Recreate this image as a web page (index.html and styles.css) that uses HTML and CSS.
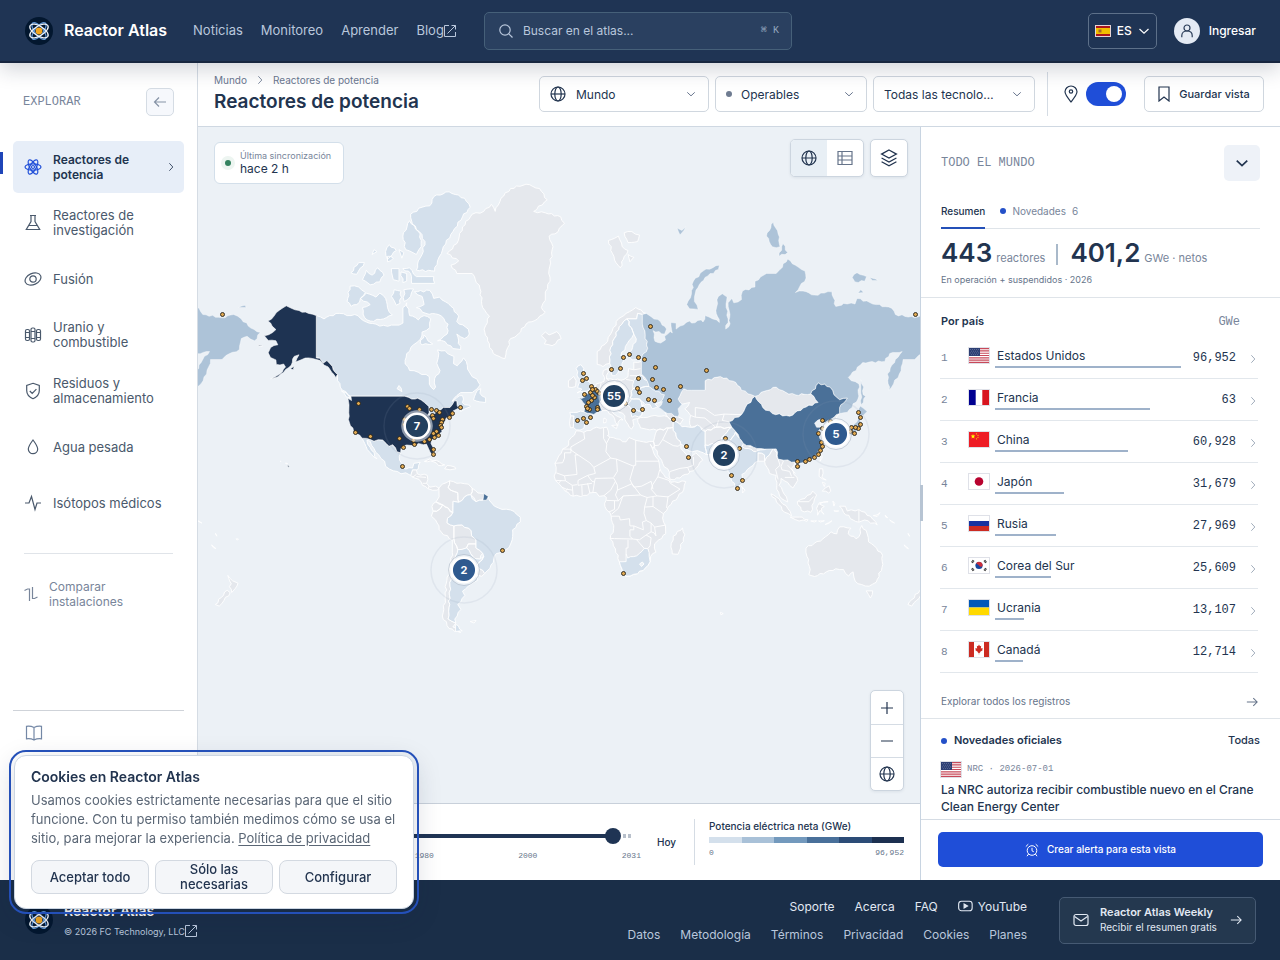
FILE: index.html
```html
<!DOCTYPE html>
<html lang="es">
<head>
<meta charset="utf-8">
<meta name="viewport" content="width=device-width, initial-scale=1">
<title>Reactores de potencia · Reactor Atlas</title>
<link rel="stylesheet" href="styles.css">
</head>
<body>
<svg class="sprite" aria-hidden="true">
  <symbol id="logo" viewBox="0 0 28 28"><circle cx="14" cy="14" r="14" fill="#03172f"/><g fill="none" stroke="#5f98d8" stroke-width="1.2"><ellipse cx="14" cy="14" rx="10.200" ry="4.200" transform="rotate(52 14 14)"/><ellipse cx="14" cy="14" rx="10.200" ry="4.200" transform="rotate(-52 14 14)"/></g><g fill="none" stroke="#f2f6fb" stroke-width="1.300"><ellipse cx="14" cy="14" rx="10.400" ry="4.800" transform="rotate(32 14 14)"/><ellipse cx="14" cy="14" rx="10.400" ry="4.800" transform="rotate(-32 14 14)"/></g><circle cx="14" cy="14" r="3.400" fill="#f2a51f"/></symbol>
  <symbol id="external" viewBox="0 0 12 12"><path d="M5 .5H.5v11h11V7M7.500.5h4v4M11.500.5l-8 8"/></symbol>
  <symbol id="search" viewBox="0 0 14 14"><circle cx="6" cy="6" r="5.200"/><path d="M9.800 9.800l3.700 3.700"/></symbol>
  <symbol id="down" viewBox="0 0 12 12"><path d="M1.500 4l4.500 4.200L10.500 4"/></symbol>
  <symbol id="right" viewBox="0 0 12 12"><path d="M4 1.500l4.200 4.500L4 10.500"/></symbol>
  <symbol id="arrow-right" viewBox="0 0 14 14"><path d="M1 7h12M8.500 2.500L13 7l-4.500 4.500"/></symbol>
  <symbol id="arrow-left" viewBox="0 0 14 14"><path d="M13 7H1.500M6 2.500L1.500 7 6 11.500"/></symbol>
  <symbol id="user" viewBox="0 0 14 14"><circle cx="7" cy="4" r="3"/><path d="M1.800 13.200V11.500C1.800 8.800 4 7 7 7s5.200 1.800 5.200 4.500v1.700"/></symbol>
  <symbol id="globe" viewBox="0 0 16 16"><circle cx="8" cy="8" r="7"/><ellipse cx="8" cy="8" rx="3.200" ry="7"/><path d="M1 8h14"/></symbol>
  <symbol id="pin" viewBox="0 0 14 18"><path d="M7 17C3.500 12.500 1 9.500 1 6.800a6 5.800 0 0 1 12 0C13 9.500 10.500 12.500 7 17z"/><circle cx="7" cy="6.500" r="1.700"/></symbol>
  <symbol id="bookmark" viewBox="0 0 12 16"><path d="M1 1h10v14l-5-4-5 4z"/></symbol>
  <symbol id="table" viewBox="0 0 16 16"><path d="M1 1.500h14v13H1zM5 1.500v13M1 6h14M1 10h14"/></symbol>
  <symbol id="layers" viewBox="0 0 16 17"><path d="M8 1l7 3.800-7 3.800-7-3.800zM1 8.500l7 3.800 7-3.800M1 12l7 3.800L15 12"/></symbol>
  <symbol id="atom" viewBox="0 0 18 18"><g><ellipse cx="9" cy="9" rx="8" ry="3.200"/><ellipse cx="9" cy="9" rx="8" ry="3.200" transform="rotate(60 9 9)"/><ellipse cx="9" cy="9" rx="8" ry="3.200" transform="rotate(120 9 9)"/><circle cx="9" cy="9" r="1.500"/></g></symbol>
  <symbol id="flask" viewBox="0 0 18 18"><path d="M6 1.500h6M7 1.500v6L2.300 15.500h13.400L11 7.500v-6M5 11.500h8"/></symbol>
  <symbol id="fusion" viewBox="0 0 18 18"><ellipse cx="9" cy="9" rx="8.300" ry="5.600" transform="rotate(-24 9 9)"/><circle cx="9" cy="9" r="3.200"/></symbol>
  <symbol id="rods" viewBox="0 0 18 18"><rect x="1.500" y="3.500" width="4" height="11" rx="1.500"/><rect x="7" y="2" width="4" height="14" rx="1.500"/><rect x="12.500" y="3.500" width="4" height="11" rx="1.500"/><path d="M1.500 6.500h4M1.500 11.500h4M7 5.500h4M7 12.500h4M12.500 6.500h4M12.500 11.500h4"/></symbol>
  <symbol id="shield" viewBox="0 0 18 18"><path d="M9 1.300l6.300 2.200v5c0 4-2.600 6.600-6.300 8.200-3.700-1.600-6.300-4.200-6.300-8.200v-5zM5.800 9l2.400 2.400 4.200-4.300"/></symbol>
  <symbol id="drop" viewBox="0 0 18 18"><path d="M9 2c3 4 4.700 6.500 4.700 9a4.700 4.700 0 0 1-9.400 0C4.300 8.500 6 6 9 2z"/></symbol>
  <symbol id="pulse" viewBox="0 0 18 18"><path d="M1 9h4l2.500-6.500L11 15.500 13 9h4"/></symbol>
  <symbol id="compare" viewBox="0 0 14 16"><path d="M.5 4.500L3.500 3h2v12M8.500 1v11.500h2l3-1.500"/></symbol>
  <symbol id="book" viewBox="0 0 18 18"><path d="M9 3.500C6.500 2.200 4 2 1.500 2.300v12.500c2.500-.3 5-.1 7.500 1.200 2.500-1.300 5-1.500 7.500-1.200V2.300C14 2 11.500 2.200 9 3.500zM9 3.500V16"/></symbol>
  <symbol id="plus" viewBox="0 0 14 14"><path d="M1 7h12M7 1v12"/></symbol>
  <symbol id="minus" viewBox="0 0 14 14"><path d="M1 7h12"/></symbol>
  <symbol id="alarm" viewBox="0 0 14 14"><circle cx="7" cy="7.500" r="4.800"/><path d="M7 4.800v3l1.800 1M.8 3.600l2.500-2.400M13.200 3.600l-2.500-2.400M3.600 11L2 13.200M10.400 11l1.600 2.200"/></symbol>
  <symbol id="mail" viewBox="0 0 16 14"><rect x="1" y="1.500" width="14" height="11" rx="2"/><path d="M1.500 3.500L8 8l6.500-4.500"/></symbol>
  <symbol id="youtube" viewBox="0 0 16 12"><rect x=".700" y=".900" width="14.400" height="10.200" rx="3"/><path d="M6.500 3.800v4.400L10.200 6z" fill="currentColor"/></symbol>

  <symbol id="flag-us" viewBox="0 0 20 15"><path fill="#fff" d="M0 0h20v15H0z"/><path stroke="#c8495a" stroke-width="1.150" d="M0 .6h20M0 2.900h20M0 5.200h20M0 7.500h20M0 9.800h20M0 12.100h20M0 14.400h20"/><path fill="#2d3f74" d="M0 0h11v8H0z"/><path stroke="#8a96b8" stroke-width=".700" stroke-dasharray=".7 1.300" d="M1 1.500h9M2 3.200h8M1 4.900h9M2 6.600h8"/></symbol>
  <symbol id="flag-fr" viewBox="0 0 20 15"><path fill="#fff" d="M0 0h20v15H0z"/><path fill="#000091" d="M0 0h6.700v15H0z"/><path fill="#d8141f" d="M13.300 0H20v15h-6.700z"/></symbol>
  <symbol id="flag-cn" viewBox="0 0 20 15"><path fill="#ee1c25" d="M0 0h20v15H0z"/><path fill="#ff0" d="M4 2l.6 1.600h1.700L5 4.700l.5 1.700L4 5.400l-1.500 1L3 4.700 1.700 3.600h1.700z"/><g fill="#ffd500"><circle cx="7.500" cy="1.800" r=".6"/><circle cx="9" cy="3.300" r=".6"/><circle cx="9" cy="5.300" r=".6"/><circle cx="7.500" cy="6.800" r=".6"/></g></symbol>
  <symbol id="flag-jp" viewBox="0 0 20 15"><path fill="#fff" d="M0 0h20v15H0z"/><circle cx="10" cy="7.500" r="4.300" fill="#b8032f"/></symbol>
  <symbol id="flag-ru" viewBox="0 0 20 15"><path fill="#fff" d="M0 0h20v5H0z"/><path fill="#1632a0" d="M0 5h20v5H0z"/><path fill="#cc2b22" d="M0 10h20v5H0z"/></symbol>
  <symbol id="flag-kr" viewBox="0 0 20 15"><path fill="#fff" d="M0 0h20v15H0z"/><circle cx="10" cy="7.500" r="3.600" fill="#17479e"/><path fill="#cd2e3a" d="M7 5.500a3.600 3.600 0 0 1 6.600 2.300c-1 1.500-2.600 1-3.600-.3S7.800 6 7 5.500z"/><path stroke="#333" stroke-width="2.200" d="M3 4.700l1.800-2.600M3 10.300l1.800 2.600M17 4.700l-1.800-2.600M17 10.300l-1.800 2.600" stroke-dasharray="1.200 .400"/></symbol>
  <symbol id="flag-ua" viewBox="0 0 20 15"><path fill="#0057b7" d="M0 0h20v7.500H0z"/><path fill="#ffd900" d="M0 7.500h20V15H0z"/></symbol>
  <symbol id="flag-ca" viewBox="0 0 20 15"><path fill="#fff" d="M0 0h20v15H0z"/><path fill="#cc2b22" d="M0 0h5v15H0zM15 0h5v15h-5zM10 2.500l1 1.800 1.200-.6-.4 2.800 1.900-.6-.5 1.500.7.600-2.900 2 .2.900-1-.1v1.700h-.4v-1.700l-1 .1.200-.9-2.900-2 .7-.6-.5-1.500 1.900.6-.4-2.800 1.200.6z"/></symbol>
  <symbol id="flag-es" viewBox="0 0 16 12"><path fill="#aa151b" d="M0 0h16v12H0z"/><path fill="#f1bf00" d="M0 3h16v6H0z"/><path fill="#a8662a" d="M3.500 4.500h3v3h-3z"/></symbol>
</svg>

<header class="topbar">
  <a class="brand" href="#"><svg class="logo"><use href="#logo"/></svg>Reactor Atlas</a>
  <nav class="topnav" aria-label="Principal">
    <a href="#">Noticias</a><a href="#">Monitoreo</a><a href="#">Aprender</a><a href="#">Blog<svg class="icon external"><use href="#external"/></svg></a>
  </nav>
  <label class="search">
    <svg class="icon search-icon"><use href="#search"/></svg>
    <input type="search" placeholder="Buscar en el atlas..." aria-label="Buscar en el atlas">
    <kbd>⌘ K</kbd>
  </label>
  <div class="account">
    <button class="lang" type="button"><svg class="flag-small"><use href="#flag-es"/></svg>ES<svg class="icon s12"><use href="#down"/></svg></button>
    <a class="login" href="#"><span class="avatar"><svg class="icon s14"><use href="#user"/></svg></span>Ingresar</a>
  </div>
</header>

<div class="workspace">
  <aside class="sidebar">
    <div class="side-head"><h2>EXPLORAR</h2><button type="button" class="collapse" aria-label="Contraer"><svg class="icon s14"><use href="#arrow-left"/></svg></button></div>
    <nav class="side-nav" aria-label="Explorar">
      <a class="active" href="#"><svg class="icon s18"><use href="#atom"/></svg><span>Reactores de potencia</span><svg class="icon s10 chevron"><use href="#right"/></svg></a>
      <a href="#"><svg class="icon s18"><use href="#flask"/></svg><span>Reactores de investigación</span></a>
      <a href="#"><svg class="icon s18"><use href="#fusion"/></svg><span>Fusión</span></a>
      <a href="#"><svg class="icon s18"><use href="#rods"/></svg><span>Uranio y combustible</span></a>
      <a href="#"><svg class="icon s18"><use href="#shield"/></svg><span>Residuos y almacenamiento</span></a>
      <a href="#"><svg class="icon s18"><use href="#drop"/></svg><span>Agua pesada</span></a>
      <a href="#"><svg class="icon s18"><use href="#pulse"/></svg><span>Isótopos médicos</span></a>
    </nav>
    <a class="compare" href="#"><svg class="icon s14"><use href="#compare"/></svg><span>Comparar instalaciones</span></a>
    <div class="side-foot"><a href="#" aria-label="Guía"><svg class="icon s18"><use href="#book"/></svg></a></div>
  </aside>

  <main class="main">
    <div class="toolbar">
      <div class="titles">
        <nav class="crumbs" aria-label="Ruta"><a href="#">Mundo</a><svg class="icon s10"><use href="#right"/></svg><span>Reactores de potencia</span></nav>
        <h1>Reactores de potencia</h1>
      </div>
      <div class="filters">
        <label class="pick region"><svg class="icon s16"><use href="#globe"/></svg><select aria-label="Región"><option>Mundo</option></select><svg class="icon s10 caret"><use href="#down"/></svg></label>
        <label class="pick status"><i class="dot"></i><select aria-label="Estado"><option>Operables</option></select><svg class="icon s10 caret"><use href="#down"/></svg></label>
        <label class="pick tech"><select aria-label="Tecnología"><option>Todas las tecnologías</option></select><svg class="icon s10 caret"><use href="#down"/></svg></label>
      </div>
      <label class="toggle"><svg class="icon pin"><use href="#pin"/></svg><input type="checkbox" role="switch" checked aria-label="Mostrar ubicaciones"></label>
      <button class="save" type="button"><svg class="icon bookmark"><use href="#bookmark"/></svg>Guardar vista</button>
    </div>

    <div class="content">
      <section class="map-column">
        <div class="map">
          <svg id="world" class="world" viewBox="198 127 722 676" preserveAspectRatio="xMidYMid slice" role="img" aria-label="Mapa mundial de reactores"></svg>
          <div class="sync"><i></i><div><small>Última sincronización</small><b>hace 2 h</b></div></div>
          <div class="map-tools">
            <div class="segment"><button type="button" class="on" aria-label="Mapa"><svg class="icon s16"><use href="#globe"/></svg></button><button type="button" aria-label="Tabla"><svg class="icon s16"><use href="#table"/></svg></button></div>
            <button class="layers" type="button" aria-label="Capas"><svg class="icon s18"><use href="#layers"/></svg></button>
          </div>
          <div class="zoom">
            <button type="button" aria-label="Acercar"><svg class="icon s14"><use href="#plus"/></svg></button>
            <button type="button" aria-label="Alejar"><svg class="icon s14"><use href="#minus"/></svg></button>
            <button type="button" aria-label="Mundo entero"><svg class="icon s16"><use href="#globe"/></svg></button>
          </div>
        </div>
        <div class="timeline">
          <div class="years">
            <input type="range" min="1954" max="2031" value="2029" aria-label="Año">
            <div class="ticks"><span>1980</span><span>2000</span><span>2031</span></div>
          </div>
          <button class="today" type="button">Hoy</button>
          <div class="legend">
            <strong>Potencia eléctrica neta (GWe)</strong>
            <div class="scale"><i></i><i></i><i></i><i></i><i></i><i></i></div>
            <div class="ticks"><span>0</span><span>96,952</span></div>
          </div>
        </div>
      </section>

      <aside class="panel">
        <div class="panel-head"><h2>TODO EL MUNDO</h2><button type="button" aria-label="Plegar panel"><svg class="icon s14"><use href="#down"/></svg></button></div>
        <div class="tabs" role="tablist"><button type="button" role="tab" aria-selected="true">Resumen</button><button type="button" role="tab" aria-selected="false"><i></i>Novedades <span>6</span></button></div>
        <div class="stats">
          <p class="figures"><b>443</b><span>reactores</span><i></i><b>401,2</b><span>GWe · netos</span></p>
          <p class="note">En operación + suspendidos · 2026</p>
        </div>
        <div class="ranking">
          <div class="ranking-head"><h3>Por país</h3><span>GWe</span></div>
          <ol>
            <li><a href="#"><span class="pos">1</span><svg class="flag"><use href="#flag-us"/></svg><span class="country">Estados Unidos<i style="width:100%"></i></span><span class="value">96,952</span><svg class="icon s10"><use href="#right"/></svg></a></li>
            <li><a href="#"><span class="pos">2</span><svg class="flag"><use href="#flag-fr"/></svg><span class="country">Francia<i style="width:83.500%"></i></span><span class="value">63</span><svg class="icon s10"><use href="#right"/></svg></a></li>
            <li><a href="#"><span class="pos">3</span><svg class="flag"><use href="#flag-cn"/></svg><span class="country">China<i style="width:71.300%"></i></span><span class="value">60,928</span><svg class="icon s10"><use href="#right"/></svg></a></li>
            <li><a href="#"><span class="pos">4</span><svg class="flag"><use href="#flag-jp"/></svg><span class="country">Japón<i style="width:37.200%"></i></span><span class="value">31,679</span><svg class="icon s10"><use href="#right"/></svg></a></li>
            <li><a href="#"><span class="pos">5</span><svg class="flag"><use href="#flag-ru"/></svg><span class="country">Rusia<i style="width:33%"></i></span><span class="value">27,969</span><svg class="icon s10"><use href="#right"/></svg></a></li>
            <li><a href="#"><span class="pos">6</span><svg class="flag"><use href="#flag-kr"/></svg><span class="country">Corea del Sur<i style="width:30.300%"></i></span><span class="value">25,609</span><svg class="icon s10"><use href="#right"/></svg></a></li>
            <li><a href="#"><span class="pos">7</span><svg class="flag"><use href="#flag-ua"/></svg><span class="country">Ucrania<i style="width:15.400%"></i></span><span class="value">13,107</span><svg class="icon s10"><use href="#right"/></svg></a></li>
            <li><a href="#"><span class="pos">8</span><svg class="flag"><use href="#flag-ca"/></svg><span class="country">Canadá<i style="width:14.900%"></i></span><span class="value">12,714</span><svg class="icon s10"><use href="#right"/></svg></a></li>
          </ol>
          <a class="explore" href="#">Explorar todos los registros<svg class="icon s12"><use href="#arrow-right"/></svg></a>
        </div>
        <div class="news">
          <div class="news-head"><h3><i></i>Novedades oficiales</h3><a href="#">Todas</a></div>
          <article><p class="source"><svg class="flag"><use href="#flag-us"/></svg>NRC · 2026-07-01</p><a class="headline" href="#">La NRC autoriza recibir combustible nuevo en el Crane Clean Energy Center</a></article>
        </div>
        <div class="alert"><button type="button"><svg class="icon s14"><use href="#alarm"/></svg>Crear alerta para esta vista</button></div>
        <div class="grip" aria-hidden="true"></div>
      </aside>
    </div>
  </main>
</div>

<footer class="footer">
  <div class="foot-brand"><svg class="logo"><use href="#logo"/></svg><div><b>Reactor Atlas</b><a href="#">© 2026 FC Technology, LLC<svg class="icon external"><use href="#external"/></svg></a></div></div>
  <nav class="foot-links" aria-label="Pie">
    <div class="bright"><a href="#">Soporte</a><a href="#">Acerca</a><a href="#">FAQ</a><a href="#"><svg class="icon youtube"><use href="#youtube"/></svg>YouTube</a></div>
    <div><a href="#">Datos</a><a href="#">Metodología</a><a href="#">Términos</a><a href="#">Privacidad</a><a href="#">Cookies</a><a href="#">Planes</a></div>
  </nav>
  <a class="weekly" href="#"><svg class="icon s16"><use href="#mail"/></svg><span><b>Reactor Atlas Weekly</b><small>Recibir el resumen gratis</small></span><svg class="icon s12"><use href="#arrow-right"/></svg></a>
</footer>

<section class="cookies" role="dialog" aria-labelledby="cookies-title">
  <h2 id="cookies-title">Cookies en Reactor Atlas</h2>
  <p>Usamos cookies estrictamente necesarias para que el sitio funcione. Con tu permiso también medimos cómo se usa el sitio, para mejorar la experiencia. <a href="#">Política de privacidad</a></p>
  <div class="choices"><button type="button">Aceptar todo</button><button type="button">Sólo las necesarias</button><button type="button">Configurar</button></div>
</section>
<script src="map.js"></script>
</body>
</html>
```

FILE: styles.css
```css
:root {
  --navy: #1f3454;
  --ink: #22344f;
  --text: #4a596c;
  --muted: #78859a;
  --line: #d5dce4;
  --blue: #1f4ed8;
  --mono: "Liberation Mono", monospace;
}
* { box-sizing: border-box; }
body {
  margin: 0;
  height: 100vh;
  display: flex;
  flex-direction: column;
  font: 12px/15px Inter, "Liberation Sans", sans-serif;
  color: var(--ink);
  background: #fff;
}
a { color: inherit; text-decoration: none; }
button, input, select { font: inherit; color: inherit; }
button { cursor: pointer; padding: 0; border: 0; background: none; }
h1, h2, h3, p, ol { margin: 0; padding: 0; }
.sprite { display: none; }
.icon { fill: none; stroke: currentColor; stroke-width: 1.2; flex: none; width: 16px; height: 16px; overflow: visible; }
.s10 { width: 10px; height: 10px; }
.s12 { width: 12px; height: 12px; }
.s14 { width: 14px; height: 14px; }
.s16 { width: 16px; height: 16px; }
.s18 { width: 18px; height: 18px; }
.external { width: 12px; height: 12px; stroke-width: 1; }
.logo { width: 30px; height: 28px; flex: none; }

/* Top bar */
.topbar {
  position: relative;
  z-index: 3;
  flex: none;
  display: flex;
  align-items: center;
  height: 63px;
  padding: 0 24px;
  background: var(--navy);
  border-bottom: 2px solid #17263f;
  box-shadow: 0 6px 20px rgba(20, 35, 60, .2);
  color: #fff;
}
.brand { display: flex; align-items: center; gap: 10px; font-size: 16px; font-weight: 600; }
.topnav { display: flex; gap: 18px; margin-left: 26px; font-size: 13px; color: #b9c7dc; }
.topnav a { display: flex; align-items: center; }
.search {
  display: flex;
  align-items: center;
  gap: 10px;
  width: 308px;
  height: 38px;
  margin-left: 28px;
  padding: 0 12px 0 14px;
  border: 1px solid #466079;
  border-radius: 5px;
  background: #2a4060;
  color: #b9c7dc;
}
.search-icon { width: 14px; height: 14px; }
.search input { flex: 1; min-width: 0; padding: 0; border: 0; outline: 0; background: none; }
.search input::placeholder { color: #b9c7dc; opacity: 1; }
.search kbd { font: 10px/12px var(--mono), "DejaVu Sans"; color: #95a6bf; }
.account { display: flex; align-items: center; gap: 17px; margin-left: auto; font-weight: 500; }
.lang { display: flex; align-items: center; gap: 6px; height: 36px; padding: 0 6px; border: 1px solid #5d7089; border-radius: 5px; }
.flag-small { width: 16px; height: 12px; outline: 1px solid #e7d5d5; outline-offset: -1px; }
.login { display: flex; align-items: center; gap: 9px; }
.avatar { display: grid; place-items: center; width: 26px; height: 26px; border-radius: 50%; background: #e4eaf4; color: #2b3d59; }

/* Frame */
.workspace { flex: 1; min-height: 0; display: grid; grid-template-columns: 198px minmax(0, 1fr); }
.main { display: flex; flex-direction: column; min-height: 0; }
.content { flex: 1; min-height: 0; display: grid; grid-template-columns: minmax(0, 1fr) 360px; }

/* Sidebar */
.sidebar { display: flex; flex-direction: column; min-height: 0; padding-top: 25px; border-right: 1px solid var(--line); color: var(--text); }
.side-head { display: flex; align-items: center; justify-content: space-between; padding: 0 23px; }
.side-head h2 { font: 12px/15px var(--mono); color: var(--muted); }
.collapse { display: grid; place-items: center; width: 28px; height: 28px; border: 1px solid var(--line); border-radius: 5px; background: #f6f8fc; color: #8693a6; }
.side-nav { display: flex; flex-direction: column; gap: 4px; margin: 25px 13px 0; font-size: 13px; }
.side-nav a { position: relative; display: flex; align-items: center; gap: 11px; height: 52px; padding: 0 8px 0 11px; border-radius: 5px; }
.side-nav span { flex: 1; }
.side-nav .active { background: #e7eef8; color: var(--ink); font-size: 12px; font-weight: 600; }
.side-nav .active .icon:first-child { color: var(--blue); }
.side-nav .active::before { content: ""; position: absolute; left: -13px; top: 11px; width: 3px; height: 22px; background: #1f45b8; }
.side-nav .chevron { stroke-width: 1; }
.compare { display: flex; align-items: center; gap: 11px; margin: 24px 24px 0; padding-top: 25px; border-top: 1px solid #e0e4e9; color: var(--muted); }
.compare span { flex: 1; }
.compare .icon { height: 16px; }
.side-foot { flex: none; height: 170px; margin: auto 13px 0; padding: 13px 12px; border-top: 1px solid #cfd3d9; color: #7488a6; }

/* Toolbar */
.toolbar { flex: none; display: flex; align-items: center; height: 64px; padding: 0 16px 1px; border-bottom: 1px solid #cfd8e2; }
.titles { flex: 1; min-width: 0; }
.crumbs { display: flex; align-items: center; gap: 8px; font-size: 10px; line-height: 12px; color: #6b7890; }
h1 { font-size: 19px; line-height: 26px; font-weight: 600; white-space: nowrap; margin-top: 3px; }
.crumbs .icon { stroke-width: 1; }
.filters { display: flex; gap: 6px; }
.pick { display: flex; align-items: center; height: 36px; padding: 0 12px 0 10px; border: 1px solid #d0d7df; border-radius: 5px; background: #fff; }
.pick select { flex: 1; min-width: 0; height: 34px; padding: 0; border: 0; outline: 0; background: none; appearance: none; text-overflow: ellipsis; }
.pick .caret { margin-left: 12px; color: #6b7890; }
.region { width: 170px; gap: 10px; }
.status { width: 152px; gap: 9px; }
.tech { width: 162px; }
.pick.region .caret, .pick.status .caret { margin-left: 0; }
.dot { width: 6px; height: 6px; border-radius: 50%; background: #6f7c91; }
.toggle { display: flex; align-items: center; gap: 8px; height: 44px; margin-left: 12px; padding-left: 16px; border-left: 1px solid var(--line); }
.pin { width: 14px; height: 18px; }
.toggle input { appearance: none; display: flex; width: 40px; height: 24px; margin: 0; padding: 4px; border-radius: 12px; background: var(--blue); justify-content: flex-end; }
.toggle input::before { content: ""; width: 16px; height: 16px; border-radius: 50%; background: #fff; }
.save { display: flex; align-items: center; justify-content: center; gap: 9px; width: 120px; height: 36px; margin-left: 18px; border: 1px solid #d0d7df; border-radius: 5px; font-size: 11px; font-weight: 500; white-space: nowrap; }
.bookmark { width: 12px; height: 16px; }

/* Map */
.map-column { display: flex; flex-direction: column; min-height: 0; }
.map { position: relative; flex: 1; min-height: 0; overflow: hidden; background: #ecf1f6; }
.world { position: absolute; inset: 0; width: 100%; height: 100%; }
.land { stroke: #fff; stroke-width: .9; stroke-linejoin: round; fill: #e5e8ed; }
.land.low { fill: #d4e0ec; }
.land.mid { fill: #adc3d8; stroke-width: .4; }
.land.high { fill: #4a7098; stroke-width: .6; }
.land.top { fill: #1e3352; stroke-width: .6; }
.land.gap { fill: #ecf1f6; }
.border { fill: none; stroke: #fff; stroke-width: .9; }
.site { fill: #e0a850; stroke: #25221c; stroke-width: .9; }
.halo { fill: none; stroke: #8c9db4; stroke-opacity: .13; stroke-width: 1.5; }
.ring { fill: #fff; fill-opacity: .5; stroke: #9aa8ba; stroke-opacity: .5; stroke-width: 1; }
.core { stroke: #fff; stroke-width: 2.500; fill: #22405f; }
.core.near { fill: #2f5a8f; }
.count { fill: #fff; font: 700 11px Inter, sans-serif; text-anchor: middle; }
.sync { position: absolute; left: 16px; top: 15px; display: flex; align-items: center; gap: 5px; height: 42px; padding: 0 12px 0 6px; border: 1px solid #d3dfea; border-radius: 6px; background: #fff; }
.sync i { flex: none; width: 6px; height: 6px; margin: 4px; border-radius: 50%; background: #34825f; box-shadow: 0 0 0 4px #edf5f1; }
.sync small { display: block; font-size: 9px; line-height: 12px; color: var(--muted); }
.sync b { display: block; line-height: 14px; font-weight: 400; }
.map-tools { position: absolute; top: 12px; right: 12px; display: flex; gap: 6px; }
.segment, .layers, .zoom { border: 1px solid #ccd5df; border-radius: 5px; background: #fff; overflow: hidden; box-shadow: 0 1px 3px rgba(30, 50, 80, .08); }
.segment { display: flex; width: 74px; height: 38px; }
.segment button, .layers { flex: 1; display: grid; place-items: center; }
.segment button + button { color: #66748a; }
.segment .on { background: #e8eff5; }
.layers { flex: none; width: 38px; height: 38px; }
.zoom { position: absolute; right: 16px; bottom: 12px; display: grid; grid-auto-rows: 33px; width: 34px; }
.zoom button { display: grid; place-items: center; }
.zoom button + button { border-top: 1px solid var(--line); }

/* Timeline */
.timeline { flex: none; display: flex; align-items: center; height: 77px; padding: 0 16px; border-top: 1px solid #c8d0da; background: #fff; }
.years { flex: 1; min-width: 0; padding-top: 4px; }
.years input { appearance: none; display: block; width: calc(100% - 20px); height: 16px; margin: 0 10px 6px; background: linear-gradient(90deg, var(--navy) 96%, #fff 96% 98%, #b8c0cb 98% 98.700%, #fff 98.700% 99.300%, #b8c0cb 99.300%) center / 100% 4px no-repeat; }
.years input::-webkit-slider-thumb { appearance: none; width: 16px; height: 16px; border-radius: 50%; background: var(--navy); }
.ticks { display: flex; justify-content: space-between; font: 8px/11px var(--mono); color: #68778c; }
.years .ticks { width: 53%; margin-left: auto; }
.today { margin: 0 18px 0 16px; font-size: 10px; font-weight: 500; }
.legend { width: 210px; height: 46px; padding-left: 14px; border-left: 1px solid var(--line); }
.legend strong { display: block; font-size: 10px; line-height: 14px; font-weight: 500; }
.scale { display: flex; margin: 4px 0; }
.scale i { flex: 1; height: 6px; background: #d4e0ec; }
.scale i:nth-child(2) { background: #a9c1d8; }
.scale i:nth-child(3) { background: #7399bd; }
.scale i:nth-child(4) { background: #49709a; }
.scale i:nth-child(5) { background: #2c4c77; }
.scale i:nth-child(6) { background: #1c3050; }

/* Right panel */
.panel { position: relative; display: flex; flex-direction: column; min-height: 0; border-left: 1px solid #c8d4e1; background: #fff; }
.grip { position: absolute; left: -1px; top: 358px; width: 3px; height: 36px; background: #b7c4d3; }
.panel-head { flex: none; display: flex; align-items: center; justify-content: space-between; height: 72px; padding: 0 20px; }
.panel-head h2 { font: 12px/15px var(--mono); color: var(--muted); }
.panel-head button { display: grid; place-items: center; width: 36px; height: 36px; border-radius: 5px; background: #eef2f8; }
.panel-head .icon { stroke-width: 1.500; }
.tabs { flex: none; display: flex; gap: 15px; height: 30px; margin: 0 20px; border-bottom: 1px solid #dfe4e9; font-size: 10px; }
.tabs button { display: flex; align-items: center; gap: 6px; height: 30px; padding-bottom: 6px; color: var(--muted); }
.tabs button[aria-selected=true] { color: var(--ink); border-bottom: 2px solid #2450b8; font-weight: 500; padding-bottom: 4px; }
.tabs i, .news-head i { width: 6px; height: 6px; border-radius: 50%; background: #2450c8; }
.stats { flex: none; height: 69px; padding: 7px 20px 0; border-bottom: 1px solid #dfe4e9; }
.figures { display: flex; align-items: baseline; gap: 4px; font-size: 11px; color: var(--muted); white-space: nowrap; }
.figures b { font-size: 26px; line-height: 34px; font-weight: 600; color: var(--ink); }
.figures i { align-self: center; width: 2px; height: 21px; margin: 3px 8px 0 7px; background: #a9b9ca; }
.note { margin-top: 3px; font-size: 9px; line-height: 14px; color: #66748a; }
.ranking { flex: none; padding: 16px 22px 0 19px; border-bottom: 1px solid #dfe4e9; }
.ranking-head { display: flex; justify-content: space-between; padding: 0 18px 0 1px; line-height: 15px; }
.ranking-head h3 { font-size: 11px; font-weight: 600; }
.ranking-head span { font: 12px/17px var(--mono); color: var(--muted); }
ol { margin-top: 6px; list-style: none; }
li a { display: grid; grid-template-columns: 29px 20px 194px 1fr 10px; align-items: center; height: 42px; padding-top: 2px; border-bottom: 1px solid #e2e7ec; }
.pos { padding: 0 0 0 1px; font: 11px/15px var(--mono); color: var(--muted); }
.flag { width: 20px; height: 15px; outline: 1px solid #dfe1e8; }
li .flag { align-self: start; margin-top: 9px; }
.country { display: block; margin-left: 6px; padding: 0 0 2px 2px; line-height: 17px; }
.country i { display: block; height: 2px; margin: 2px 0 0 -2px; background: #9fb2ca; }
.value { padding-right: 12px; text-align: right; font: 12px/15px var(--mono); }
li .icon { color: #8f9cad; stroke-width: 1; }
.explore { display: flex; align-items: center; justify-content: space-between; height: 45px; padding: 12px 0 0 1px; font-size: 10px; color: #66748a; }
.news { flex: 1; min-height: 0; overflow: hidden; padding: 14px 20px 0; }
.news-head { display: flex; justify-content: space-between; font-size: 11px; font-weight: 500; }
.news-head h3 { display: flex; align-items: center; gap: 7px; font-size: 11px; font-weight: 600; }
.source { display: flex; align-items: center; gap: 6px; margin: 14px 0 4px; font: 9px/15px var(--mono); color: var(--muted); }
.headline { display: block; font-size: 12px; line-height: 17px; font-weight: 500; }
.alert { flex: none; height: 61px; padding: 12px 17px 0; border-top: 1px solid var(--line); background: #fff; }
.alert button { display: flex; align-items: center; justify-content: center; gap: 8px; width: 100%; height: 35px; border-radius: 5px; background: var(--blue); color: #fff; font-size: 10px; font-weight: 500; }
.alert .icon { stroke-width: 1; }

/* Footer */
.footer { flex: none; display: flex; align-items: center; height: 80px; padding: 0 24px; background: #1a2e48; color: #b9c7dc; }
.foot-brand { display: flex; align-items: center; gap: 10px; margin-right: auto; font-size: 9px; }
.foot-brand b { display: block; line-height: 17px; margin-bottom: 5px; font-size: 14px; font-weight: 600; color: #fff; }
.foot-brand a { display: flex; align-items: center; }
.foot-links { display: grid; gap: 13px; }
.foot-links div { display: flex; justify-content: flex-end; gap: 20px; }
.foot-links a { display: flex; align-items: center; gap: 5px; }
.foot-links .bright { color: #e2e9f3; }
.youtube { width: 15px; height: 12px; }
.weekly { display: flex; align-items: center; gap: 11px; width: 197px; height: 47px; margin-left: 32px; padding: 0 13px; border: 1px solid #465a73; border-radius: 5px; background: #24384f; color: #e2e9f3; font-size: 11px; }
.weekly span { flex: 1; white-space: nowrap; }
.weekly b { display: block; font-weight: 600; }
.weekly small { display: block; font-size: 10px; }

/* Cookie notice */
.cookies {
  position: fixed;
  z-index: 5;
  left: 14px;
  bottom: 51px;
  width: 400px;
  padding: 13px 16px 14px;
  border: 1px solid #ccd6e3;
  border-radius: 12px;
  background: #fff;
  outline: 2px solid #2450b8;
  outline-offset: 3px;
  box-shadow: 0 8px 28px rgba(20, 35, 60, .18);
  font-size: 13px;
}
.cookies h2 { font-size: 14px; line-height: 16px; font-weight: 600; }
.cookies p { margin: 6px 0 12px; line-height: 19px; color: #5a6675; }
.cookies p a { text-decoration: underline; text-underline-offset: 2px; }
.choices { display: grid; grid-template-columns: repeat(3, 1fr); gap: 6px; }
.choices button { height: 34px; padding: 0 16px; border: 1px solid #d3d9e1; border-radius: 8px; background: #f4f6f9; line-height: 15px; font-weight: 500; }
```

FILE: map.js
```js
// Web Mercator projection in map units.
const LON0 = 587.6, PER_DEG = 1.924, EQUATOR = 504.6, RADIUS = 110.2;
const svg = document.getElementById('world');
const NS = 'http://www.w3.org/2000/svg';

function project(pair, shift) {
  const [lon, lat] = pair.split(',').map(Number);
  const y = EQUATOR - RADIUS * Math.log(Math.tan(Math.PI / 4 + lat * Math.PI / 360));
  return (LON0 + PER_DEG * (lon + shift)).toFixed(1) + ' ' + y.toFixed(1);
}
function add(tag, attrs, text) {
  const el = document.createElementNS(NS, tag);
  for (const k in attrs) el.setAttribute(k, attrs[k]);
  if (text) el.textContent = text;
  svg.appendChild(el);
}
// Breaks long edges into small deterministic steps so coasts look natural.
function rough(points) {
  const out = [];
  points.forEach((p, i) => {
    const q = points[(i + 1) % points.length];
    const [ax, ay] = p.split(' ').map(Number), [bx, by] = q.split(' ').map(Number);
    out.push(p);
    const len = Math.hypot(bx - ax, by - ay);
    if (len < 5 || Math.abs(by - ay) < .3 || Math.abs(bx - ax) < .3) return;
    const n = Math.floor(len / 3);
    // Order-independent seed keeps shared borders aligned.
    const s = Math.round((ax + bx) * 7 + (ay + by) * 13);
    const flip = ax < bx ? 1 : -1;
    for (let k = 1; k < n; k++) {
      const t = k / n, m = flip > 0 ? k : n - k;
      const off = Math.sin(s + m * 2.4) * .9 * flip;
      out.push((ax + (bx - ax) * t - (by - ay) / len * off).toFixed(1) + ' ' + (ay + (by - ay) * t + (bx - ax) / len * off).toFixed(1));
    }
  });
  return out;
}
function land(kind, shapes) {
  let d = '';
  for (const shape of shapes) {
    const pts = shape.trim().split(/\s+/);
    for (const shift of [0, -360]) {
      const last = Math.max(...pts.map(p => parseFloat(p)));
      if (shift && last < 150) continue;
      d += 'M' + rough(pts.map(p => project(p, shift))).join('L') + 'Z';
    }
  }
  add('path', { class: 'land ' + kind, d });
}
function borders(lines) {
  add('path', { class: 'border', d: lines.map(l => 'M' + l.split(' ').map(p => project(p, 0)).join('L')).join('') });
}

land('none', [
  // Greenland, Iceland, Svalbard
  '-73,78.3 -68,79.3 -65,80.8 -60,81.8 -54,82 -50,82.5 -48,82 -45,82.9 -40,83.5 -32,83.75 -25,83.5 -21,82.8 -28,82 -22,81.9 -14,81.6 -12,81.1 -17,80.2 -20,80 -18,79 -20,76.5 -19.500,75 -22,73.500 -22,72.2 -24,71 -22,70.2 -26,69 -32,68 -36,66 -40,65 -41.500,63 -43,60.2 -46,60.8 -49,61.5 -51,63 -52,64.5 -53.800,67 -51,69.5 -54.500,71 -56,74 -60,76 -68,76 -71,77 -67,77.500 -73,78.3',
  '-24,65.6 -22,66.4 -20,65.800 -16,66.5 -13.700,65 -18.500,63.4 -22.500,63.8 -21.500,64.500',
  '10.800,79.6 14,79.800 16,80 18,79 21,78.6 19,78 17,76.7 14,77.6', '19,80.3 23,80.400 27,80.1 26,79.500 21,79.400', '21,78.200 24,77.900 22,77.400',
  // Central America, Caribbean
  '-92,15 -91,17.8 -89,17.8 -88.500,15.8 -83.300,15 -83.700,11 -82,9 -79,9.5 -77.300,8.6 -78,7.5 -80.500,7.4 -83,8.3 -85.800,10 -87.600,13 -90,13.8',
  '-84.800,21.9 -82,23.1 -77,21.6 -74.200,20.2 -77.500,19.9 -80,21.7', '-74.300,18.3 -73,19.9 -69,19.2 -68.500,18.3 -71.500,17.8',
  // South America
  '-77.300,8.6 -75.500,10.6 -71.700,12.3 -72.500,9 -70,7 -67.500,6.2 -67,1.2 -69.900,1.7 -70,-4.2 -74,-1 -78.800,1.4 -77.200,4',
  '-71.700,12.3 -68,11 -62,10.6 -60,8.5 -60.700,5.2 -64,4 -67,1.2 -67.500,6.2 -70,7 -72.500,9',
  '-60,8.5 -57,6 -54,5.8 -54.400,2.3 -58,1.5 -60.700,5.2',
  '-78.800,1.4 -75.300,-0.1 -78.500,-3.5 -80.300,-3.4 -80.900,-1',
  '-80.300,-3.4 -78.500,-3.5 -75.300,-.1 -70,-4.2 -72.800,-7 -73,-9.5 -69.500,-11 -69.500,-17.5 -70.300,-18.3 -76,-14.2 -79,-8 -81.200,-6',
  '-69.500,-11 -65.300,-10.5 -60.500,-13.5 -60.300,-16 -58,-18 -58,-20 -62,-20 -63,-22 -67.500,-22.8 -69.500,-17.5',
  '-62,-20 -58,-20 -58,-22 -54.500,-24.5 -55.800,-27.3 -58.600,-27 -63,-22',
  '-70.300,-18.3 -69.500,-17.5 -67.500,-22.8 -69,-27 -70.300,-33 -71.500,-39 -72,-47 -72.500,-51 -68.500,-52.3 -70,-53.5 -66,-55.2 -72,-54 -75.500,-50 -74,-44 -73.500,-38 -71.500,-31 -70.300,-24',
  '-57.600,-30.2 -53.500,-33.7 -55,-34.9 -58.400,-34', '-61,-51.800 -58,-51.500 -59,-52.300',
  // Africa and Madagascar
  '-6,35.8 -2,35.1 3,36.8 10,37.3 11,34 10.300,33.8 15,32.3 20,31 21.500,32.9 25,31.7 29,31 32.300,31.2 34.200,31.2 34.900,29.5 34,28 32.600,29.9 34,27 35.500,24 37.200,21 37.500,18.5 39.500,15.5 43.200,12 43.300,11.5 51,11.9 50,8 47,4 42,-1 39.500,-4.5 39,-7 40.500,-11 40.600,-15 37,-18 34.800,-20 35.500,-24 32.800,-26 32.500,-28.5 30,-31.3 26,-33.8 20,-34.8 18.300,-34 18,-32 16.500,-28.5 14.500,-22.5 11.800,-17.5 13.500,-12.5 12.300,-6 9,-1 9.700,3.8 8.500,4.6 6,4.3 4.500,6.3 2.700,6.3 -2,4.8 -7.500,4.4 -11.500,6.9 -13.300,9 -15,11 -16.700,12.4 -17.400,14.7 -16.300,19 -17,21 -15,24.5 -13,27.7 -9.800,29.5 -9.800,31.5 -6.800,34',
  '49.300,-12 50.500,-15.5 47,-25 44,-24.8 43.300,-21.5 44.500,-16.2',
  // Europe
  '5,58.7 5,62 9,63.700 12,66 16,69 20,70 25,71 30.500,70 28.500,69.8 26,70 25.500,69 20.500,69 16.500,67.5 12,63 11.500,59 8,58.1',
  '-10,52 -6.300,52.2 -6,54 -7.300,55.3 -10,54',
  '-8.800,41.9 -7,41.8 -7.400,37.2 -8.900,37 -9.400,38.8',
  '2.500,51 4.500,53 8.500,53.8 8.200,57 10.500,57.5 10,54.5 14,54.2 19,54.4 21,55.2 21.300,57.5 24,57.2 24,59.3 28,59.5 28,56 31,54 32,52.2 23.600,51.5 22.200,48.4 27,48 28.200,45.5 28.600,43.8 28,41.8 26,40.8 23.500,40.3 24,38 22.800,36.5 20,39.5 19.400,41.8 15,44.2 13.600,45.4 12.300,44.5 14,42.4 18.400,40.2 16.900,40.4 15.700,38 14,40.9 10.300,43.9 7.500,43.8 6,46.3 8.200,49',
  '8.300,39 8.500,41 9.700,40.500 9.500,39.200', '12.500,38 15.500,38.200 15,36.700',
  // Near East and Central Asia
  '26,40.5 29,41.2 35,42 41.500,41.5 44.500,39.8 44.500,37.2 36,36 30.500,36.5 27.500,37',
  '36,36 44.500,37.2 46,33.5 48.500,30 48.500,28 50,26.5 51.500,25 54,24.2 56.300,26 59.800,22.5 55,17.3 45,12.8 43,13 42.500,16.5 39,21 35,28 34.300,31.3',
  '41.500,41.5 40,43.4 47,41.5 49.700,40.5 48,38.5 44.500,39.8',
  '47,48 50,51.5 54,51 61,51 61,54 69,55.3 77,53.5 80,51 87,49 82,45 80,42.3 73.500,39.5 75,37.3 71,36.8 67,37.3 61,35.5 54,37.2 53,40 53.500,42 50.500,44.5 53,46.8 49,46.2',
  '61,35.5 67,37.3 71,36.8 75,37.3 71,34 69.500,31.5 66,29.8 61,29.6',
  '87,49 92,50.7 98,52 103,50.3 108,49.5 116,49.8 119.800,46.8 112,44.8 105,41.7 96,42.7 91,45',
  // South-east Asia
  '92,22 94.500,25 97,28.5 99,23 102,22.5 108,21.6 106,18.5 109.200,12.5 106.700,8.6 105,10 102.500,12.2 100.500,13.5 99.500,10 103.400,4 104,1.4 101,3 98.300,8 98,15 94.500,16',
  '88.500,22 88.500,26 92,25 92,22', '80,9.5 81.800,7.5 80.500,6',
  '95.300,5.6 98,4 104,-2 106,-5.8 102.500,-4', '105.300,-6.5 110,-6.5 114.500,-7.8 114,-8.7 108,-7.8',
  '109,1.5 113,3.2 117,7 119,5 117.500,1 116,-4 111,-3', '119.500,-5.5 119,-2 120.500,1 125,1.5 120.500,.3 123,-1 121.500,-2 122.800,-5 120.800,-3',
  '120.500,18.3 122.200,18.3 121.700,14 124,12.7 120.300,14.5', '122,7 125.500,9.7 126.400,7 125.300,6', '122,11.500 123.500,11 123,9.300',
  '131,-.8 134,-.9 135,-3.3 141,-2.6 147,-6 150.500,-10.5 144,-8 141,-9.1 138,-8 133,-4', '148.500,-5.7 152,-4.2 150.500,-6.2',
  '116,-8.500 119,-8.400 118,-9', '120,-8.500 123,-8.400 121,-9', '123.500,-10.300 127,-8.400 125,-9.500', '127.500,1.800 128.500,.5 128,-.8', '128,-3.200 130.500,-3.300 129,-3.600',
  '154.700,-5.500 156,-6.800 155,-6.500', '157,-8 159.500,-9.500 158,-8.900', '164.500,-20.5 166.800,-22.3 165.500,-21.800', '166.600,-14.800 167.400,-16.200 166.900,-15.800', '177.300,-17.500 178.500,-17.600 178,-18.200',
  // Australia and New Zealand
  '113.500,-22 114,-26 115.700,-32 115,-34.3 118,-35 124,-33 129,-31.6 133,-32 135.700,-34.8 138,-33 138.500,-35.6 140.500,-38 146.300,-39 150,-37.4 153,-31 153.300,-25.5 149,-21 146,-19 145.300,-15 142.500,-10.8 141,-16.5 139.500,-17.5 135.500,-15 136.800,-12.2 131,-11.5 129.500,-15 126.500,-14 122.300,-17.5',
  '144.800,-40.9 148.200,-40.9 147,-43.6', '173,-34.5 175.500,-36.8 178.300,-37.8 176.800,-40 175,-41.5 173.800,-39.2 174.800,-38', '172.700,-40.6 174.200,-41.6 171,-44.5 168.500,-46.6 166.500,-46',
  '69,-48.800 70.500,-49.200 69.300,-49.600', '-156,20.900 -156.600,20.700 -157,21.100', '-159.500,22 -159.300,21.900 -159.700,21.900'
]);
borders([
  '-2,35.1 -1.500,32.3 -8.700,28.7 -8.700,27.3', '-13,27.7 -8.700,27.7 -8.700,26 -12,26 -12,23.5 -13,21.3 -17,21',
  '-8.700,27.3 -5,25 1.200,21.2 3.200,19 12,23.5 9.500,26.5 10,30 8.300,32.5 8.300,36.9', '9.800,30.3 11.500,33.1', '-5,25 -6.500,25 -5.500,15.5 -12,14.8 -16.300,16.3',
  '25,31.7 25,22 37,22', '12,23.5 15,23 24,19.5 24,20 25,20 25,22', '15,23 15.500,17 13.500,14', '2.700,6.3 3.600,11.7 4,13.5 13.500,13.7 14.500,12 12,7.5 8.500,4.7',
  '3.200,19 4,16 0,15 2.300,12 3.600,11.7', '0,15 -5,12.5 -5,10 2.300,11', '-3,10 -2.800,5', '0,11 1.200,6', '-5.500,10.3 -8,10 -7.500,4.4', '-8,10 -11.500,12.3 -16.500,12.5', '-11.500,12.3 -12,14.8', '-13.700,12.7 -15,11', '-8,7.5 -11,8 -13.300,9', '-10.500,8.3 -11.500,6.9',
  '24,19.5 22,13 23,10.8', '15.500,7.5 19,9 23,10.8 27.500,5 18.500,4.5 16,2', '14.500,12 15.500,10 15.500,7.5 14.500,5 16,2 9.800,2.2', '23,10.8 24,9 28,9.5 33,12 34,8',
  '37.500,18 36.500,14.3 34,10.5 33,8 36,4.5 41.800,4 48,8 43,11 42.300,12.5 36.500,14.3', '36,4.5 31,3.7 27.500,5', '41.800,4 41,-1.7', '34,4 34,-1 39.300,-4.7', '31,3.7 29.600,-1.3 34,-1', '29.600,-1.3 29.300,-4.5 30.500,-8.3 33,-9.5 34.800,-11.6 40.500,-10.6',
  '12.300,-6 16.500,-6 17,-8 21.800,-7.3 22,-11 24,-11 24,-13 22,-13 22,-16.2 23.400,-17.6 14,-17.4 11.800,-17.3', '18.500,4.500 18,3.5 16,-2 12.500,-5', '14,2 14,-2.5 11,-3.9', '24,-11 29,-13 28.500,-9 30.500,-8.3',
  '23.400,-17.6 25.300,-17.8 27,-18 30.400,-15.6 33,-14 33,-9.5', '30.400,-15.6 33,-17 32.500,-21 31.300,-22.3', '25.300,-17.8 29.400,-22.2 31.300,-22.3 32,-26', '20,-24.8 20,-22 21,-22 21,-18', '34.800,-11.600 35.500,-16 34.500,-14.500 33,-14',
  '48.500,30 47,29 44.500,29.3 39,32 37,29.5 35,29.3', '39,32 42,37', '42.700,16.500 43,17 48,18.5 52,19 55,20 55,24', '52,19 53,16.7',
  '56,41.3 56,45 61,44.5 66,42 71,42.5 80,42.3', '54,37.200 57,38 61,36', '53.500,42 56,41.3 61,41 66.500,37.3', '71,42.500 70,40 73.500,39.500', '68,40 67,37.300',
  '99,23 100,20 97.700,18 99,13', '102,22.5 100.500,19.5 101,17.8 105,17 106,14.5', '102.500,14 107.500,14', '104,20 108,16', '141,-2.6 141,-9.1', '109.500,1.500 115,1.500 117.500,4.200',
  '7,53.300 6,50.800', '14.200,54 15,51', '11,54 10,54.800', '23.600,54 20,54.400', '6,46.300 10,46.500 13.600,46.500', '24,57.200 27.500,57.500', '22,55.500 26.500,55.500', '-89,14.400 -84,14', '-91,14 -89,15.500', '-85.700,11 -83.700,11', '-82.800,8.300 -82.500,9.500'
]);
land('low', [
  // Canada: mainland
  '-141,69.6 -137,69 -134,69.6 -129,70 -125,69.6 -121,69.8 -115,68.4 -110,68 -108,67.6 -102,67.8 -98,67.8 -96,68.2 -96,71 -94,71.8 -92.500,69.6 -91,69.500 -88,68.8 -85,69.6 -81.500,69 -82,67.3 -86,66.4 -87,64.8 -90.500,63.6 -94,61.5 -94.800,58.8 -92.500,57 -88,56.5 -82.300,55.2 -82.200,52.9 -80,51.2 -79,52 -79.500,54.6 -76.700,57 -78.400,59 -77.600,60.5 -78,62.4 -74,62.2 -71,61.1 -69.500,60.8 -69.700,58.9 -67.800,58.3 -65.500,59.5 -64.500,60.4 -62.500,58.3 -61.500,56.6 -60,55.2 -57.500,54.5 -55.800,52.7 -57.500,51.4 -60,50.2 -66,50.2 -68,49.2 -70.500,47.2 -68,48.500 -65,49.2 -64.500,48 -65,46.8 -64,46 -61.300,45.8 -61,45.2 -63.500,44.6 -66,43.5 -65.800,45.2 -67,44.8 -67.800,45.7 -68,47.3 -69.200,47.4 -70.300,46 -71.500,45 -75,45 -76.500,44 -79,43.4 -79,42.9 -81,42.2 -83.100,42 -82.400,43 -82.500,45.3 -83.500,46 -84.800,46.8 -88.400,48.3 -89.600,48 -93,48.6 -95,49 -123,49 -127.500,51 -130,54 -130,55.9 -132.200,57.2 -133.800,58.8 -135.500,59.7 -137.500,59 -139.200,60.3 -141,60.4',
  // Canada: islands
  '-61.500,66 -64,65 -68,66 -66,62.5 -70,62.7 -74,64.3 -78,64.5 -73,66 -72.500,68 -76,69.5 -79,69.900 -84,70 -89,71 -85,71.500 -86,72.800 -90,73.5 -82,73.7 -80,72.500 -77,72.7 -71,71.2 -67,69.5 -68,68.500 -62,67', '-117,71 -113,71.500 -118,72.5 -115,73.3 -110,72.700 -108,73.300 -105,72.5 -104,71 -101.500,69.7 -106,69 -113,68.6 -116,69.3',
  '-125,72 -123.500,74.3 -119,74.2 -115.500,73.4 -120,71.5 -123,71.2', '-102,72.8 -100.500,73.8 -97,73.6 -97.500,71.7 -99.500,71.4', '-95.500,73.8 -90.500,73.9 -92,72.8 -95.300,72', '-96,76.6 -92.500,76.7 -89,75.6 -80,75.6 -79.500,74.7 -91.500,74.7 -92,76',
  '-117,75.2 -115,76.4 -112,75.800 -109,76.7 -105.800,75.8 -108,74.9 -113,74.5', '-102,76.6 -98,76.6 -98,75 -101,75.2', '-97,76.2 -94,76 -94,75 -96,74.800', '-123,76.1 -119,77.3 -116,77.3 -120,75.9', '-96,80 -92.500,81.3 -87,80.2 -86.500,79 -89,78.2 -94.500,78.7',
  '-92,81.8 -86,82.3 -82,82.4 -80,83 -72,83.3 -64,82.9 -61,82.300 -65,81.6 -70,80.4 -75,79 -76,78.3 -78,77.500 -79.500,76.3 -89,76.4 -88,77.5 -86,78.2 -84.500,79.5 -87.500,80.4 -91,81', '-105,78.5 -103,79.2 -99.500,78.6 -104,77.7', '-111,78.7 -109.500,78.500 -112,78.200', '-98,78.700 -95.500,78.400 -96.500,77.800', '-104,78 -101,77.800 -104,77.400',
  '-59.300,47.7 -57.300,51 -55.500,51.5 -56,50 -53,48.5 -53,46.8 -56,47', '-128,50.8 -125,50 -123.400,48.4 -125.500,48.8', '-85,65.8 -83,64.500 -80.500,63.8 -86,63.6 -87,64',
  // Mexico, Brazil, Argentina
  '-117.200,32.5 -114.800,32.5 -111,31.3 -106.500,31.8 -104.700,30.3 -103.200,29 -101.300,29.7 -99.100,26.5 -97.200,26 -97.700,22.5 -96,19 -94.500,18.2 -91,18.7 -90.300,21 -87,21.5 -88,18.3 -89,17.8 -91,17.8 -92,15 -94.500,16.3 -97,15.8 -101,17.3 -105,19.5 -105.500,22 -108.500,25 -111,28 -113,31.3 -114.700,31.7 -113,28.5 -109.500,23.2 -112,25 -114.500,27.5 -115.800,30.2',
  '-60.700,5.2 -60,3 -58,1.5 -54.400,2.3 -52.600,2.3 -51.600,4.2 -50,1 -48.500,-.8 -44.500,-2.5 -40,-2.8 -37,-5 -35,-6.5 -35,-9 -39,-13 -39.200,-18 -41,-22 -44.500,-23 -48.500,-26 -49,-28.7 -52.200,-32.5 -53.500,-33.7 -57.600,-30.2 -54,-26 -54.500,-24.5 -58,-22 -58,-18 -60.300,-16 -60.500,-13.5 -65.300,-10.5 -69.500,-11 -73,-9.5 -72.800,-7 -70,-4.2 -69.900,1.7 -67,1.2 -64,4',
  '-67.500,-22.8 -63,-22 -58.600,-27 -55.800,-27.3 -54,-26 -57.600,-30.2 -58.400,-34 -57,-36.5 -62,-39 -65,-41 -63.800,-42.7 -67.500,-46 -65.800,-47.8 -69,-51 -68.500,-52.3 -72.500,-51 -72,-47 -71.500,-39 -70.300,-33 -69,-27', '-68.600,-52.7 -65.200,-54.7 -68.600,-54.9',
  // South Africa
  '16.500,-28.5 20,-28.4 20,-24.8 20.800,-26.8 25.500,-25.7 29.400,-22.2 31.300,-22.3 32,-26 32.500,-28.5 30,-31.3 26,-33.8 20,-34.8 18.300,-34 18,-32',
  // Sweden, Finland, United Kingdom, Spain, eastern Europe
  '11.500,59 12,63 16.500,67.5 20.500,69 24,66 21.500,64.5 17.300,61 18.800,59.8 16.500,57 14.300,55.5 12.800,55.5', '20.500,69 25.500,69 26,70 28.500,69.8 28.500,68 30,65.8 31.300,62.8 28,60.5 23,59.9 21.300,61 25.300,64.9 24,66',
  '-5.500,50.1 1.300,51.2 1.700,52.7 -1.500,55 -2,57.6 -3.500,58.6 -6,57.5 -4.800,54.8 -3,54 -4.600,53 -5.200,51.8 -3,51.4', '-9.200,43.2 -1.800,43.4 3.200,42.4 -.3,39.5 -2,36.8 -6,36.2 -7.400,37.2 -7,41.8 -8.800,41.9',
  '20.300,46 22.900,48 27,48 28.200,45.5 28.600,43.8 22.700,44.2', '22.700,44.2 28.600,43.8 28,42 23,41.3', '23.600,51.5 24,54 27,55.8 31,54 32,52.2', '12.300,50.2 15,51 18.800,49.5 22.200,48.4 20.300,46.1 16.500,46.5 16.500,48.8 13.800,48.7',
  '23.600,51.5 32,52.2 34,51.3 40,49.5 38.200,47.1 35,46.2 36.500,45.3 33.500,44.5 32.500,46 30.500,46.2 28.200,45.5 29.500,46.5 27,48 22.200,48.4',
  // Iran, Pakistan, India
  '44.500,39.8 48,38.5 49,37.5 54,37.2 57,38.2 61,35.5 61,29.600 61.600,25.2 57,27 54.500,26.5 51,28 48.500,30 46,33.5 44.500,37.2', '61.600,25.2 61,29.6 66,29.8 69.500,31.5 71,34 75,37.3 77,35.4 74.500,32 70,28 71,24.5 68.200,23.7 66.500,25.3',
  '68.200,23.7 71,24.5 70,28 74.500,32 77,35.4 79,32.5 81,30.3 88,27 92,27.5 97,28.5 94.500,25 92,22 92,25 88.500,26 88.500,22 86,20 80.200,15.5 79.800,10.3 77.500,8 74.500,13.5 72.800,19 72,21 69,22.2'
]);
land('gap', ['27,-29.5 28.500,-28.6 29.300,-29.5 28,-30.6', '-98,52.500 -96.500,50.500 -99,51.500']);
land('none', ['81,30.3 88,27.8 88,26.5 80.300,28.8']);
land('mid', [
  '28.500,69.8 30.500,70 33,69.4 38,68.400 41,67 40,66 34,66.7 35,64.4 38,64 40.500,64.7 40,65.500 43,66.500 44,66.2 43.300,68.3 46,68.2 46,67 48,67.6 53,68.6 54,68.200 59,68.8 60,68.400 61,69.6 65,69 67,68.800 68.500,68.300 66.700,70.500 68,72.8 70,73.2 72.500,72.7 72,71 73,69 71.800,67 73.500,67.500 74,69.800 73,71.800 75,72.500 76,71.800 80,72.3 80.500,73.6 87,74.2 87,75 93,76 98,76 100,76.5 104,77.7 108,77 113,76.3 113.500,75.4 108,73.4 112,73.600 118,73 123,73.3 127,73.5 129,71.2 132,71.4 133,71.700 139,71.6 140,72.5 150,71.5 158,70.900 160,69.8 170,69.2 176,69.8 180,69 185,67.200 190,66.3 187,64.5 183,65.500 180,65 179,62.5 172,61 170,60 164,60 163,58 162,56 159,53 156.700,51 155.800,56 160,60 163.500,62 157,61.5 154.500,59.5 143,59.2 135.500,55 137,54 141,53 140.500,48 135,43.2 131,42.7 131,45 135,48.3 131,47.8 128,49.5 126,52 120,53.3 116,49.8 108,49.5 103,50.3 98,52 92,50.7 87,49 80,51 77,53.5 69,55.3 61,54 61,51 54,51 50,51.5 47,48 49,46.2 47,44.5 47.500,42.5 47,41.5 40,43.4 37,45 39,47.2 38.200,47.1 40,49.5 34,51.3 32,52.2 31,54 28,56 28,59.5 28,60.5 31.300,62.8 30,65.8 28.500,68',
  '51.500,71.5 54,73.200 55,75 60,76.3 68.500,77 68,76.500 61,75.500 58,74.5 56,73.300 55.500,72 57.500,70.7 53,70.8', '93,80 96.500,81.2 99,80.2 100,79 98,78.900 96,79', '99.500,78 104,78.400 101.500,79.300', '137.500,75.5 140,76.1 145,75.6 144,75 139,74.9', '146.500,75.5 151,75.1 148,75.100', '46.500,80.7 49,80.5 51,80.8 50,80.500 48,80.100', '142,54.3 143.500,52 143.200,49.5 144.500,49 142.200,46 142,50', '178.500,71 182,71.4 182.500,71', '142,73.800 143.500,73.400 140.500,73.300',
  '126,37.8 128.400,38.6 129.500,35.5 126.400,34.4', '131,34.2 135.700,35.6 137,37 140,39.5 141,41.5 142,39.5 140.800,35.8 135.800,33.5 132,33.9', '130,33.7 131.800,33.4 131.200,31.2 130,32', '140,42 141.700,45.5 145.300,43.5 143.200,42'
]);
land('none', ['125,40 131,42.7 127.500,39.5 128.400,38.6 126,37.8', '121,25 121.900,25 120.800,22']);
land('high', [
  '73.500,39.5 80,42.3 82,45 87,49 91,45 96,42.7 105,41.7 112,44.8 119.800,46.8 116,49.8 120,53.3 126,52 128,49.5 131,47.8 135,48.3 131,45 131,42.7 125,40 121.500,39 122,40.7 118,39 119,37.3 122.400,37.3 119.300,35 122,31.5 121.500,28.5 117.500,23.8 110,21 108,21.6 102,22.5 99,23 98,27.8 92,27.7 88,28 81,30.3 79,32.5 77,35.5 75,37.300', '108.700,19.3 111,20 110,18.3',
  '-1.800,43.4 -1.200,46 -4.700,48.4 -1.500,48.7 2.500,51 8.200,49 6,46.3 7.500,43.8 3.200,42.4', '-54,5.8 -51.600,4.2 -52.600,2.3 -54.400,2.3'
]);
land('top', [
  '-141,69.6 -145,70 -150,70.5 -154,70.9 -156.600,71.3 -160,70.6 -163,69.5 -166.200,68.6 -164,67.6 -162,66.9 -163.700,66.3 -168,65.6 -166,64.6 -162,64.5 -161,63.6 -164.700,63 -166,61.7 -164.800,60.5 -162,59.9 -161.800,58.7 -158,58.8 -157,58 -160,56 -164.700,54.6 -161,55.2 -158,56.5 -154,58.5 -152.500,60.8 -150,61.2 -151.800,59.3 -148.500,60 -145,60.4 -141,60 -139,59.7 -137,58.5 -134.800,58 -133,56.5 -131,55 -130,55.9 -132.200,57.2 -133.800,58.8 -135.500,59.7 -137.500,59 -139.200,60.3 -141,60.4',
  '-154.500,57.500 -152.500,58.200 -153,57.200', '-171.500,63.600 -169,63.300 -170.500,63.300', '-155.900,20.100 -155,19.500 -155.700,19',
  '-123,49 -95,49 -93,48.6 -89.600,48 -88.400,48.3 -84.800,46.8 -83.500,46 -82.500,45.3 -82.400,43 -83.100,42 -81,42.2 -79,42.9 -79,43.4 -76.500,44 -75,45 -71.500,45 -70.300,46 -69.200,47.4 -68,47.3 -67.800,45.7 -67,44.8 -70,43.7 -70.800,42.5 -70,41.7 -73.500,41 -74,39.8 -75.300,38.5 -76,37 -75.700,35.4 -77.800,34 -79.500,33 -81.200,31.5 -81.400,30.2 -80.100,27 -80.400,25.3 -81.700,26 -82.700,28 -83.800,30 -85.300,29.7 -88,30.3 -89.300,29.2 -91,29.3 -94,29.6 -97,28 -97.200,26 -99.100,26.5 -101.300,29.7 -103.200,29 -104.700,30.3 -106.500,31.8 -111,31.3 -114.800,32.5 -117.200,32.6 -118.500,34 -120.600,34.6 -122,37 -123.800,39.2 -124.300,40.4 -124.100,43 -124,46 -124.600,48.3 -122.700,47.5'
]);

// Reactor sites, in map units.
const sites = '358,403 407,406 409,408 419,409 431,409 436,410 439,412 460,407 452,413 449,417 432,415 433,418 442,419 441,422 440,425 441,427 404,419 404,424 355,432 370,436 399,438 403,447 436,431 433,433 438,435 429,439 424,441 414,444 413,440 434,437 433,449 433,454 402,466 502,550 222,314 650,326 623,357 629,354 638,357 644,359 655,367 611,369 620,368 706,370 638,378 652,379 680,386 656,387 663,389 637,388 639,392 648,399 654,400 669,400 633,410 642,409 625,403 583,373 582,380 586,378 591,386 584,394 590,392 595,389 597,391 592,389 594,397 591,400 588,402 586,406 589,409 597,407 597,409 592,395 599,393 587,408 577,420 583,418 590,417 586,422 673,419 686,446 688,457 725,438 739,448 731,475 742,480 737,488 623,573 822,420 830,421 818,433 822,428 858,412 860,417 860,424 858,428 855,427 854,433 851,427 850,431 821,442 822,446 820,450 818,454 814,457 809,459 805,461 797,461 797,466 915,314';
for (const s of sites.split(' ')) {
  const [x, y] = s.split(',').map(Number);
  add('circle', { class: 'site', cx: x + .5, cy: y + .5, r: 2 });
}
const clusters = [[417, 426, '7', ''], [614, 396, '55', ''], [724, 455, '2', ''], [836, 434, '5', 'near'], [464, 570, '2', 'near']];
for (const [cx, cy, n, kind] of clusters) {
  if (n !== '55') add('circle', { class: 'halo', cx, cy, r: 33 });
  add('circle', { class: 'ring', cx, cy, r: 15.5 });
  add('circle', { class: 'core ' + kind, cx, cy, r: 12.3 });
  add('text', { class: 'count', x: cx, y: cy + 4 }, n);
}
```
